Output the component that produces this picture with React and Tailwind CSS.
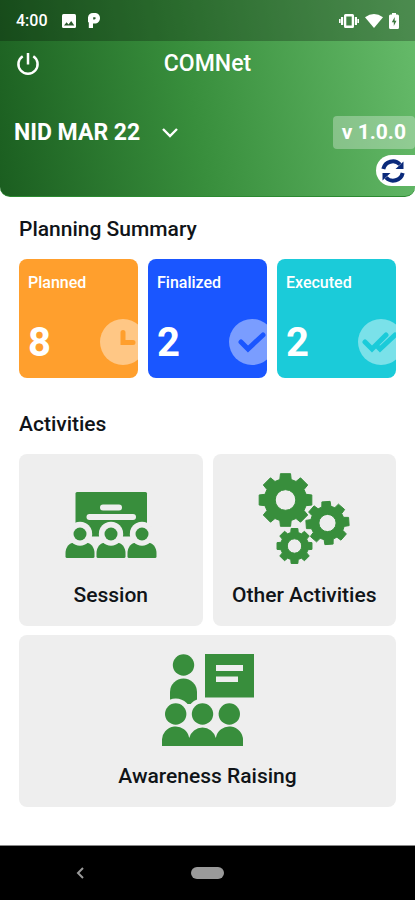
import React from "react";

function gearPath(cx, cy, outer, root, hole, turn) {
  const points = [];
  for (let i = 0; i < 8; i++) {
    const mid = (i * 45 + turn) * (Math.PI / 180);
    [
      [-0.27, root],
      [-0.19, outer],
      [0.19, outer],
      [0.27, root],
    ].forEach(([offset, r]) => {
      points.push(
        `${(cx + r * Math.cos(mid + offset)).toFixed(2)} ${(cy + r * Math.sin(mid + offset)).toFixed(2)}`
      );
    });
  }
  return `M${points.join("L")}ZM${cx - hole} ${cy}a${hole} ${hole} 0 1 0 ${hole * 2} 0a${hole} ${hole} 0 1 0 ${-hole * 2} 0Z`;
}

function SessionIcon() {
  return (
    <svg viewBox="0 0 92 92" className="size-[92px]" fill="#388e3c" aria-hidden="true">
      <rect x="10.5" y="19" width="71.5" height="44.5" rx="1.5" />
      <rect x="35" y="31.5" width="22" height="6" rx="3" fill="#eeeeee" />
      <rect x="21.5" y="41" width="49.5" height="6" rx="3" fill="#eeeeee" />
      {[15, 46, 77].map((x) => (
        <g key={x}>
          <circle cx={x} cy="61" r="12.2" fill="#eeeeee" />
          <path
            d={`M${x - 14.5} 83.5v-3.5c0-5 3-9 6.5-10h16c3.5 1 6.5 5 6.5 10v3.5q0 1.5-1.5 1.5h-26q-1.5 0-1.5-1.5z`}
          />
          <circle cx={x} cy="61" r="11.8" fill="#eeeeee" />
          <circle cx={x} cy="61" r="6.5" />
        </g>
      ))}
    </svg>
  );
}

function GearsIcon() {
  return (
    <svg
      viewBox="0 0 92 92"
      className="size-[92px]"
      fill="#388e3c"
      stroke="#388e3c"
      strokeWidth="1"
      strokeLinejoin="round"
      fillRule="evenodd"
      aria-hidden="true"
    >
      <path d={gearPath(27.5, 27, 26.8, 21.3, 10.3, 0)} />
      <path d={gearPath(69.5, 50, 21.8, 17, 8.6, -4)} />
      <path d={gearPath(36.5, 73, 17.8, 14, 7.2, 0)} />
    </svg>
  );
}

function AwarenessIcon() {
  return (
    <svg viewBox="0 0 92 92" className="size-[92px]" fill="#388e3c" aria-hidden="true">
      <rect x="43" y="0" width="49" height="43.5" />
      <rect x="54" y="11" width="27" height="6" fill="#eeeeee" />
      <rect x="54" y="22.5" width="22" height="5.5" fill="#eeeeee" />
      <circle cx="21.5" cy="11" r="10.7" />
      <path d="M8 50V38a13.5 13.5 0 0 1 27 0v12z" />
      <circle cx="13.7" cy="60" r="15.5" fill="#eeeeee" />
      <circle cx="40.5" cy="60" r="15.5" fill="#eeeeee" />
      {[13.7, 40.5, 67.3].map((x) => (
        <circle key={x} cx={x} cy="60" r="10.7" />
      ))}
      <path d="M0 92V87A13.7 13.7 0 0 1 27.2 84A13.7 13.7 0 0 1 53.8 84A13.7 13.7 0 0 1 81 87V92z" />
    </svg>
  );
}

function StatusBar() {
  return (
    <div className="flex h-[41px] items-center bg-black/25 px-4">
      <span className="text-base font-medium">4:00</span>
      <svg viewBox="0 0 14 14" className="ml-3.5 size-3.5" aria-hidden="true">
        <rect width="14" height="14" rx="1.5" fill="#fff" />
        <path d="M2 11.5 4.6 8.3l1.9 2.2L9.2 7 12.3 11.5z" fill="#2a5a2d" />
      </svg>
      <svg viewBox="0 0 12 15" className="ml-3 h-[15px] w-3" aria-hidden="true">
        <path
          d="M5 0h2C10 0 12 2.200 12 5.200s-2.200 5.400-5.400 5.400H5V15H.8V9.200H0V4.500Q.5 0 5 0z"
          fill="#fff"
        />
        <path d="M5.200 4.200h1.800q.7 0 .7.900 0 1.300-1.300 1.300H5.200z" fill="#2a5a2d" />
      </svg>
      <svg viewBox="0 0 20 14" className="ml-auto h-3.5 w-5" aria-hidden="true" fill="#fff">
        <path
          fillRule="evenodd"
          d="M6.500 0h7q1.500 0 1.500 1.500v11q0 1.500-1.500 1.500h-7Q5 14 5 12.500v-11Q5 0 6.500 0zm.8 2.500v9h5.400v-9z"
        />
        <path d="M2 3h2.200v8H2zM0 5h1.600v4H0zM15.800 3H18v8h-2.200zM18.400 5H20v4h-1.600z" />
      </svg>
      <svg viewBox="0 0 18 14" className="ml-1.5 h-3.5 w-[18px]" aria-hidden="true" fill="#fff">
        <path d="M0 3.200Q9-3 18 3.200L9 14z" />
      </svg>
      <svg viewBox="0 0 10 16" className="ml-1.5 h-4 w-2.5" aria-hidden="true">
        <path
          d="M3 0h4v1.500h1.500Q10 1.500 10 3v11.500q0 1.500-1.500 1.500h-7Q0 16 0 14.500V3q0-1.500 1.500-1.500H3z"
          fill="#fff"
        />
        <path d="M5.700 4 2.800 9.300h2V13l2.700-5.200H5.700z" fill="#3e7a41" />
      </svg>
    </div>
  );
}

function Header() {
  return (
    <header className="h-[197px] overflow-hidden rounded-b-[10px] border-b border-[#2b8a30] bg-[linear-gradient(80deg,#1b5e20_0%,#388e3c_46%,#66bb6a_100%)] text-white">
      <StatusBar />
      <div className="grid grid-cols-3 items-center px-4 pt-[5px]">
        <button type="button" aria-label="Log out" className="size-6">
          <svg
            viewBox="0 0 24 24"
            className="size-6"
            fill="none"
            stroke="#fff"
            strokeWidth="2.5"
            aria-hidden="true"
          >
            <path d="M12 1v11.500M6.700 4.200a9.600 9.600 0 1 0 10.600 0" />
          </svg>
        </button>
        <h1 className="text-center text-[23px] leading-9 font-medium">COMNet</h1>
      </div>
      <div className="flex items-center justify-between pt-[34px] pl-3.5">
        <div className="grid items-center">
          <select
            aria-label="Campaign"
            className="col-start-1 row-start-1 appearance-none bg-transparent pr-[42px] text-[23px] leading-8 font-bold outline-none"
          >
            <option>NID MAR 22</option>
          </select>
          <svg
            viewBox="0 0 16 10"
            className="pointer-events-none col-start-1 row-start-1 mr-[5px] h-2.5 w-4 justify-self-end"
            fill="none"
            stroke="#fff"
            strokeWidth="2.4"
            aria-hidden="true"
          >
            <path d="m1 1 7 7 7-7" />
          </svg>
        </div>
        <span className="rounded-sm bg-white/30 px-[9px] text-[21px] leading-[33px] font-bold">
          v 1.0.0
        </span>
      </div>
      <div className="flex justify-end pt-1.5">
        <button
          type="button"
          aria-label="Sync"
          className="flex h-[31px] w-[39px] items-center rounded-l-full bg-white pl-[5px]"
        >
          <svg viewBox="0 0 24 24" className="size-6" fill="none" aria-hidden="true">
            <path
              d="M2.300 10A9.800 9.800 0 0 1 19 5.500M21.700 14A9.800 9.800 0 0 1 5 18.500"
              stroke="#0b2a7b"
              strokeWidth="4"
            />
            <path d="M22.500 2.500v7.500h-8zM1.500 21.500V14h8z" fill="#0b2a7b" />
          </svg>
        </button>
      </div>
    </header>
  );
}

function SummaryCard({ label, value, color, children }) {
  return (
    <article
      className={`relative flex h-[119px] flex-col overflow-hidden rounded-lg px-[9px] pt-3 text-white ${color}`}
    >
      <h3 className="text-base leading-6 font-medium">{label}</h3>
      <p className="mt-6 text-[40px] leading-[48px] font-bold">{value}</p>
      <svg
        viewBox="0 0 46 46"
        className="absolute -right-2 bottom-[13px] size-[46px]"
        fill="none"
        strokeWidth="5"
        strokeLinecap="round"
        aria-hidden="true"
      >
        <circle cx="23" cy="23" r="23" fill="#fff" fillOpacity="0.42" />
        {children}
      </svg>
    </article>
  );
}

function ActivityCard({ label, wide, children }) {
  return (
    <button
      type="button"
      className={`flex h-[172px] flex-col items-center rounded-lg bg-[#eeeeee] pt-[19px] ${wide ? "col-span-2" : ""}`}
    >
      {children}
      <span className="mt-4 text-[21px] leading-7 font-medium">{label}</span>
    </button>
  );
}

export default function App() {
  return (
    <div className="flex min-h-screen flex-col bg-white font-['Roboto',sans-serif] text-[#101418]">
      <Header />
      <main className="flex-1 px-[19px] pt-[18px] pb-9">
        <h2 className="text-[21px] leading-7 font-medium">Planning Summary</h2>
        <div className="mt-4 grid grid-cols-3 gap-2.5">
          <SummaryCard label="Planned" value="8" color="bg-[#ff9f2d]">
            <path d="M23 13.500v10h10" stroke="#ff9f2d" />
          </SummaryCard>
          <SummaryCard label="Finalized" value="2" color="bg-[#1a56ff]">
            <path d="m12 23 7 7 15-14" stroke="#1a56ff" />
          </SummaryCard>
          <SummaryCard label="Executed" value="2" color="bg-[#1bcbd9]">
            <path d="m7 23 7 7 14-14M20 28l2 2 15-14" stroke="#1bcbd9" />
          </SummaryCard>
        </div>
        <h2 className="mt-8 text-[21px] leading-7 font-medium">Activities</h2>
        <div className="mt-4 grid grid-cols-2 gap-x-2.5 gap-y-[9px]">
          <ActivityCard label="Session">
            <SessionIcon />
          </ActivityCard>
          <ActivityCard label="Other Activities">
            <GearsIcon />
          </ActivityCard>
          <ActivityCard label="Awareness Raising" wide>
            <AwarenessIcon />
          </ActivityCard>
        </div>
      </main>
      <nav
        aria-label="System navigation"
        className="grid h-[55px] grid-cols-3 items-center border-t border-[#888888] bg-black"
      >
        <button type="button" aria-label="Back" className="mr-[54px] justify-self-end">
          <svg
            viewBox="0 0 8 12"
            className="h-3 w-2"
            fill="none"
            stroke="#9a9a9a"
            strokeWidth="2"
            aria-hidden="true"
          >
            <path d="M7 1 2 6l5 5" />
          </svg>
        </button>
        <button
          type="button"
          aria-label="Home"
          className="h-3 w-[33px] justify-self-center rounded-full bg-[#9a9a9a]"
        />
      </nav>
    </div>
  );
}
